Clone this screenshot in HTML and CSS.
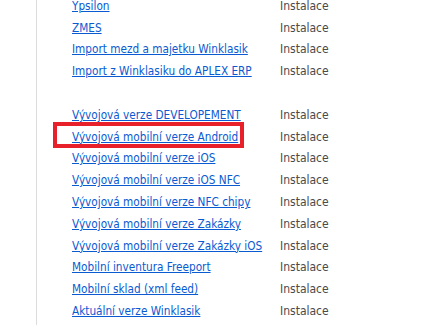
FILE: index.html
```html
<!DOCTYPE html>
<html>
<head>
<meta charset="utf-8">
<link rel="stylesheet" href="styles.css">
</head>
<body>
<div class="page">
  <table class="list">
    <tr><td class="name"><a href="#">Ypsilon</a></td><td class="act">Instalace</td></tr>
    <tr><td class="name"><a href="#">ZMES</a></td><td class="act">Instalace</td></tr>
    <tr><td class="name"><a href="#">Import mezd a majetku Winklasik</a></td><td class="act">Instalace</td></tr>
    <tr><td class="name"><a href="#">Import z Winklasiku do APLEX ERP</a></td><td class="act">Instalace</td></tr>
    <tr class="gap"><td class="name"></td><td class="act"></td></tr>
    <tr><td class="name"><a href="#">Vývojová verze DEVELOPEMENT</a></td><td class="act">Instalace</td></tr>
    <tr><td class="name mark"><a href="#">Vývojová mobilní verze Android</a></td><td class="act">Instalace</td></tr>
    <tr><td class="name"><a href="#">Vývojová mobilní verze iOS</a></td><td class="act">Instalace</td></tr>
    <tr><td class="name"><a href="#">Vývojová mobilní verze iOS NFC</a></td><td class="act">Instalace</td></tr>
    <tr><td class="name"><a href="#">Vývojová mobilní verze NFC chipy</a></td><td class="act">Instalace</td></tr>
    <tr><td class="name"><a href="#">Vývojová mobilní verze Zakázky</a></td><td class="act">Instalace</td></tr>
    <tr><td class="name"><a href="#">Vývojová mobilní verze Zakázky iOS</a></td><td class="act">Instalace</td></tr>
    <tr><td class="name"><a href="#">Mobilní inventura Freeport</a></td><td class="act">Instalace</td></tr>
    <tr><td class="name"><a href="#">Mobilní sklad (xml feed)</a></td><td class="act">Instalace</td></tr>
    <tr><td class="name"><a href="#">Aktuální verze Winklasik</a></td><td class="act">Instalace</td></tr>
  </table>
</div>
</body>
</html>
```
FILE: styles.css
```css
html, body {
  margin: 0;
  padding: 0;
  background: #fff;
}
body {
  font-family: "DejaVu Sans Condensed", "DejaVu Sans", sans-serif;
  font-size: 12px;
  overflow: hidden;
  height: 325px;
}
.page {
  margin-left: 36px;
  border-left: 1px solid #dcdcdc;
  padding-left: 35px;
  margin-top: -5px;
  min-height: 340px;
}
.list {
  border-collapse: collapse;
}
.list td {
  height: 21.8px;
  padding: 0;
  vertical-align: middle;
  white-space: nowrap;
}
.name {
  width: 208px;
}
.name a {
  color: #0a5ad2;
  text-decoration: underline;
  font-size: 11.7px;
}
.act {
  color: #4a4a4a;
}
.mark {
  position: relative;
}
.mark::before {
  content: "";
  position: absolute;
  left: -19px;
  width: 183px;
  top: -4px;
  height: 18px;
  border: 4px solid #e8202a;
}
```
